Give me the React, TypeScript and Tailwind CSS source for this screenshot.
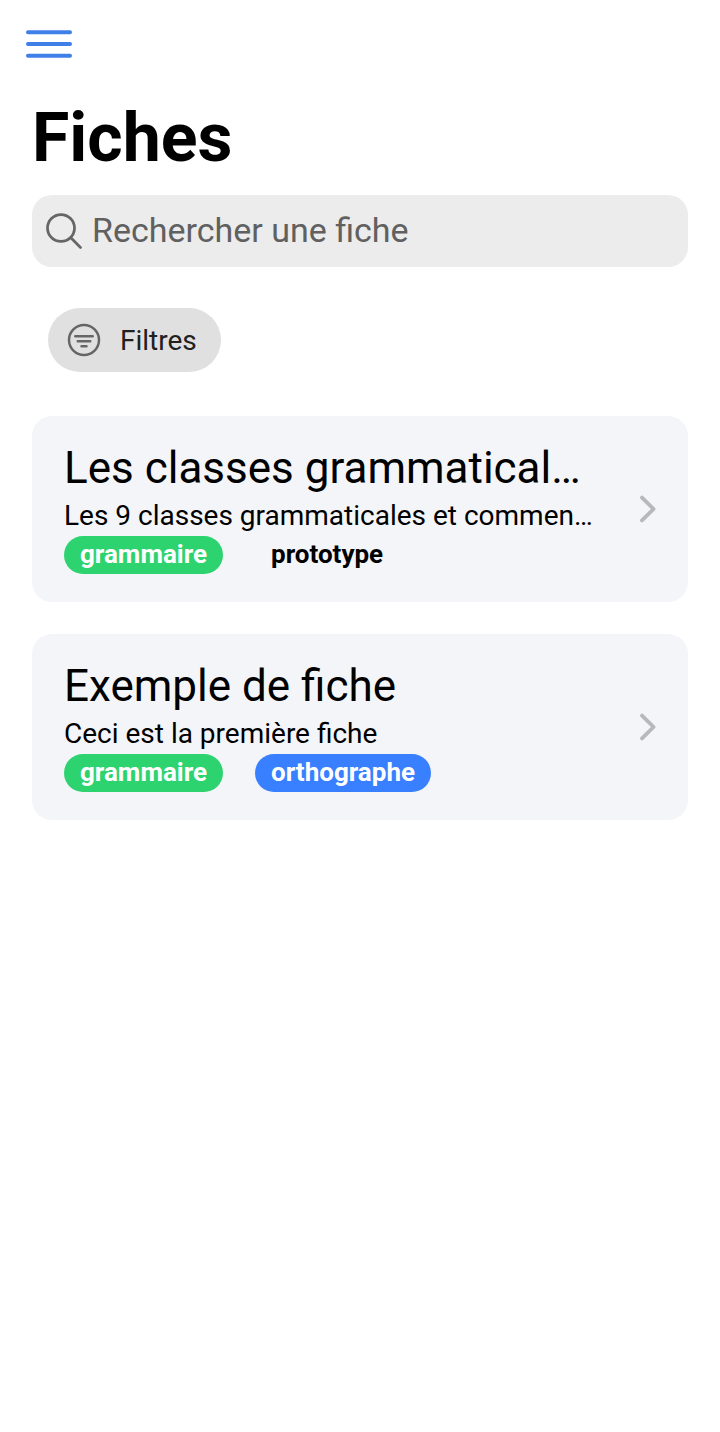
import React from "react";

type Tag = { label: string; className: string };
type Sheet = { title: string; description: string; tags: Tag[] };

const GREEN = "bg-[#2dd36f] text-white";
const BLUE = "bg-[#3880ff] text-white";
const PLAIN = "text-black";

const sheets: Sheet[] = [
  {
    title: "Les classes grammatical…",
    description: "Les 9 classes grammaticales et commen…",
    tags: [
      { label: "grammaire", className: GREEN },
      { label: "prototype", className: PLAIN },
    ],
  },
  {
    title: "Exemple de fiche",
    description: "Ceci est la première fiche",
    tags: [
      { label: "grammaire", className: GREEN },
      { label: "orthographe", className: BLUE },
    ],
  },
];

function MenuIcon() {
  return (
    <svg className="h-[56px] w-[56px]" viewBox="0 0 56 56" fill="none" stroke="#3f7fe8" strokeLinecap="round" strokeWidth="4">
      <path d="M7 16.3h42M7 28h42M7 39.7h42" />
    </svg>
  );
}

function SearchIcon() {
  return (
    <svg className="h-[44px] w-[44px] shrink-0" viewBox="0 0 512 512" fill="none" stroke="#666666" strokeWidth="32" strokeMiterlimit="10">
      <path d="M221.09 64a157.09 157.09 0 10157.09 157.09A157.1 157.1 0 00221.09 64z" />
      <path d="M338.29 338.29L448 448" strokeLinecap="round" />
    </svg>
  );
}

function FilterIcon() {
  return (
    <svg className="h-[40px] w-[40px] shrink-0" viewBox="0 0 512 512" fill="none" stroke="#666666" strokeWidth="32" strokeLinecap="round" strokeLinejoin="round">
      <path d="M448 256c0-106-86-192-192-192S64 150 64 256s86 192 192 192 192-86 192-192z" strokeMiterlimit="10" />
      <path d="M144 208h224M176 272h160M224 336h64" />
    </svg>
  );
}

function Chevron() {
  return (
    <svg className="h-[32px] w-[32px] shrink-0" viewBox="0 0 32 32" fill="none" stroke="#b7b8ba" strokeWidth="3.8" strokeLinecap="round" strokeLinejoin="round">
      <path d="M10 4.6L21.6 16L10 27.4" />
    </svg>
  );
}

function SheetCard({ title, description, tags }: Sheet) {
  return (
    <li className="flex h-[186px] items-center rounded-[20px] bg-[#f4f5f8] pl-8 pr-6">
      <div className="flex h-full min-w-0 flex-1 flex-col pt-[24px]">
        <h2 className="h-[56px] whitespace-nowrap text-[44px] leading-[56px]">{title}</h2>
        <p className="h-[40px] whitespace-nowrap text-[28px] leading-[40px]">{description}</p>
        <div className="flex gap-8">
          {tags.map((tag) => (
            <span key={tag.label} className={`h-[38px] rounded-full px-4 text-[26px] font-bold leading-[37px] ${tag.className}`}>
              {tag.label}
            </span>
          ))}
        </div>
      </div>
      <Chevron />
    </li>
  );
}

export default function App() {
  return (
    <main className="min-h-[1432px] bg-white text-black [font-family:Roboto,sans-serif]">
      <header className="flex h-[88px] items-center pl-[21px]">
        <button aria-label="Menu">
          <MenuIcon />
        </button>
      </header>
      <div className="px-8">
        <h1 className="h-[107px] pt-[9px] text-[68px] font-bold leading-[82px]">Fiches</h1>
        <div className="flex h-[72px] items-center gap-[6px] rounded-[20px] bg-[#ececec] pl-[10px] text-[34px] text-[#606060]">
          <SearchIcon />
          <span className="pb-[2px]">Rechercher une fiche</span>
        </div>
        <button className="ml-4 mt-[41px] flex h-[64px] w-[173px] items-center gap-4 rounded-full bg-[#e0e0e0] pl-4 text-[28px] text-[#202020]">
          <FilterIcon />
          <span className="pt-[2px]">Filtres</span>
        </button>
        <ul className="mt-[44px] flex flex-col gap-8">
          {sheets.map((sheet) => (
            <SheetCard key={sheet.title} {...sheet} />
          ))}
        </ul>
      </div>
    </main>
  );
}
